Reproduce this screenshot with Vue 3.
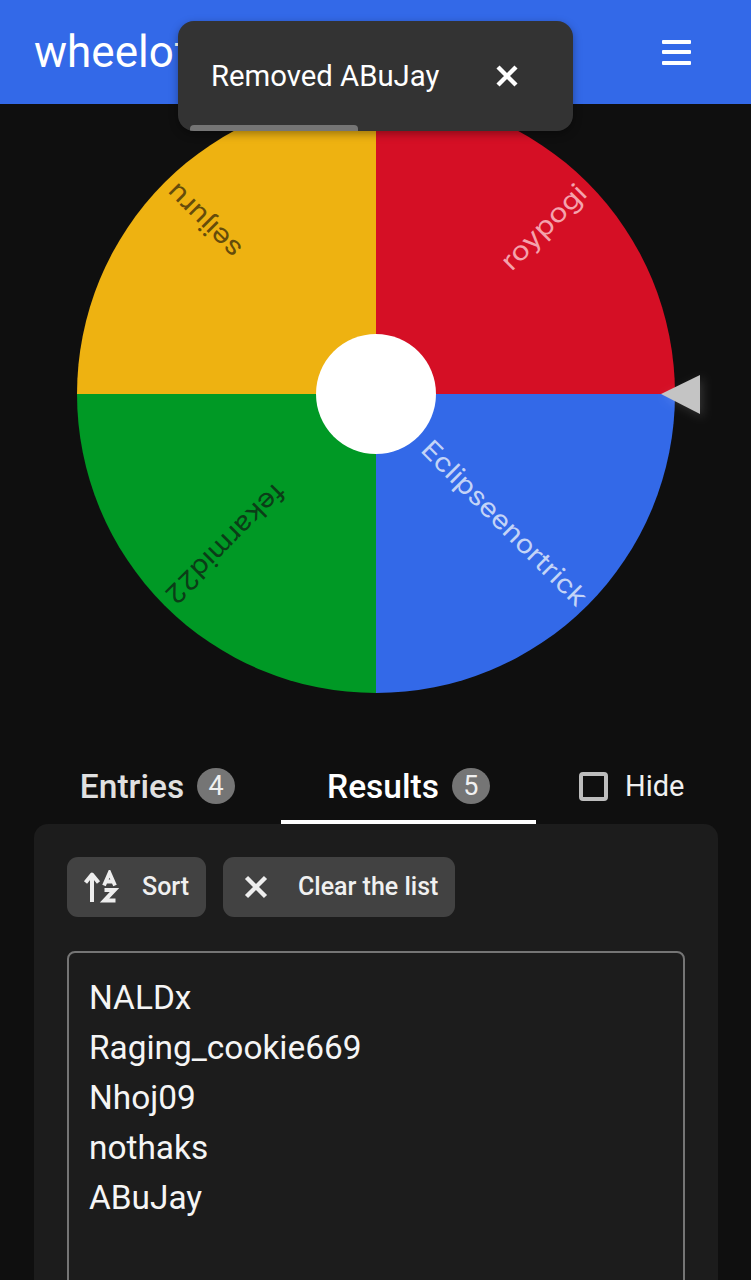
<template>
  <div class="page">
    <header class="topbar">
      <div class="logo">wheelofnames.com</div>
      <button class="menu-btn" aria-label="menu">
        <span></span><span></span><span></span>
      </button>
    </header>

    <!-- wheel -->
    <svg class="wheel" viewBox="0 0 751 641">
      <defs>
        <filter id="pointer-shadow" x="-50%" y="-50%" width="200%" height="200%">
          <feDropShadow dx="3" dy="3" stdDeviation="5" flood-color="#fff" flood-opacity="0.14" />
        </filter>
      </defs>
      <path v-for="s in sectors" :key="s.name" :d="s.d" :fill="s.color" />
      <text
        v-for="s in sectors"
        :key="s.name + '-label'"
        class="wheel-label"
        :transform="`translate(${CX} ${CY}) rotate(${s.angle})`"
        :x="s.x"
        y="0"
        :text-anchor="s.anchor"
        :fill="s.text"
        :textLength="s.len"
        lengthAdjust="spacingAndGlyphs"
      >{{ s.name }}</text>
      <circle :cx="CX" :cy="CY" r="60" fill="#fff" />
      <polygon points="661,290 700,271 700,310" fill="#c4c4c4" filter="url(#pointer-shadow)" />
    </svg>

    <div class="tabs">
      <div class="tab first">
        <span>Entries</span><span class="badge">4</span>
      </div>
      <div class="tab active">
        <span>Results</span><span class="badge">5</span>
      </div>
      <label class="hide">
        <span class="checkbox"></span>
        <span>Hide</span>
      </label>
    </div>

    <section class="card">
      <div class="actions">
        <button class="btn sort">
          <svg width="36" height="34" viewBox="0 0 36 34" fill="none" stroke="#eee" stroke-width="4">
            <path d="M9 32V5M2.5 12.5L9 4.5L15.5 12.5" stroke-linejoin="round" />
            <path d="M21 15.5L26.5 3L32 15.5M23 11.5H30" stroke-width="3.8" />
            <path d="M21.5 20H31.5L21.5 30.5H32.5" stroke-width="4" />
          </svg>
          <span>Sort</span>
        </button>
        <button class="btn clear">
          <svg width="24" height="24" viewBox="0 0 24 24" fill="none" stroke="#eee" stroke-width="4.4">
            <path d="M2.5 2.5L21.5 21.5M21.5 2.5L2.5 21.5" />
          </svg>
          <span>Clear the list</span>
        </button>
      </div>
      <div class="results">
        <div v-for="r in results" :key="r">{{ r }}</div>
      </div>
    </section>

    <!-- toast over the header -->
    <div class="toast">
      <span class="toast-text">Removed ABuJay</span>
      <svg width="22" height="22" viewBox="0 0 22 22" fill="none" stroke="#fff" stroke-width="4.4">
        <path d="M2 2L20 20M20 2L2 20" />
      </svg>
      <div class="toast-progress"></div>
    </div>
  </div>
</template>

<script setup>
const CX = 376
const CY = 290
const R = 299

function slice(from, to) {
  const a = (from * Math.PI) / 180
  const b = (to * Math.PI) / 180
  const x1 = CX + R * Math.cos(a)
  const y1 = CY + R * Math.sin(a)
  const x2 = CX + R * Math.cos(b)
  const y2 = CY + R * Math.sin(b)
  return `M${CX},${CY} L${x1},${y1} A${R},${R} 0 0 1 ${x2},${y2} Z`
}

const sectors = [
  { name: 'Eclipseenortrick', color: '#3369e8', text: '#c3d4f7', d: slice(0, 90), angle: 45, x: 293, anchor: 'end', len: 222 },
  { name: 'fekarmid22', color: '#009925', text: '#0b3d17', d: slice(90, 180), angle: 135, x: 291, anchor: 'end', len: 157 },
  { name: 'seijuru', color: '#eeb211', text: '#654c0b', d: slice(180, 270), angle: 225, x: 291, anchor: 'end', len: 94 },
  { name: 'roypogi', color: '#d50f25', text: '#f4a3ad', d: slice(270, 360), angle: 315, x: 291, anchor: 'end', len: 109 },
]

const results = ['NALDx', 'Raging_cookie669', 'Nhoj09', 'nothaks', 'ABuJay']
</script>

<style>
html, body { background: #0f0f0f; }
</style>

<style scoped>
.page {
  position: relative;
  height: 1280px;
  overflow: hidden;
  background: #0f0f0f;
  font-family: Roboto, "Liberation Sans", sans-serif;
  color: #fff;
}
.topbar {
  height: 104px;
  background: #3369e8;
  display: flex;
  align-items: center;
  justify-content: space-between;
  padding: 0 60px 0 34px;
}
.logo { font-size: 44px; white-space: nowrap; }
.menu-btn {
  width: 29px;
  height: 25px;
  padding: 0;
  background: none;
  border: 0;
  display: flex;
  flex-direction: column;
  justify-content: space-between;
}
.menu-btn span { display: block; height: 4px; border-radius: 1px; background: #fff; }
.wheel { display: block; width: 751px; height: 641px; }
.wheel-label {
  font-family: Inter, "Noto Sans", sans-serif;
  font-size: 26px;
  dominant-baseline: central;
}
.tabs {
  height: 79px;
  display: flex;
}
.tab {
  width: 255px;
  display: flex;
  align-items: center;
  justify-content: center;
  gap: 13px;
  padding-top: 7px;
  box-sizing: border-box;
  font-size: 33.5px;
  font-weight: 500;
  color: #e0e0e0;
  border-bottom: 4px solid transparent;
}
.tab.first { width: 247px; margin-left: 34px; }
.tab.active { color: #fff; border-bottom-color: #fff; }
.badge {
  width: 38px;
  height: 36px;
  border-radius: 50%;
  background: #757575;
  color: #f0f0f0;
  font-size: 27px;
  font-weight: 400;
  display: flex;
  align-items: center;
  justify-content: center;
}
.hide {
  display: flex;
  align-items: center;
  gap: 17px;
  margin-left: 43px;
  padding-top: 3px;
  font-size: 29px;
  color: #f0f0f0;
}
.checkbox {
  width: 29px;
  height: 29px;
  box-sizing: border-box;
  border: 4px solid #bdbdbd;
  border-radius: 4px;
}
.card {
  margin: 0 33px 0 34px;
  height: 600px;
  padding: 33px 33px 0;
  background: #1c1c1c;
  border-radius: 14px 14px 0 0;
}
.actions { display: flex; gap: 17px; }
.btn {
  height: 60px;
  padding: 0;
  border: 0;
  border-radius: 11px;
  background: #424242;
  color: #f0f0f0;
  font-family: inherit;
  font-size: 25px;
  font-weight: 500;
  display: flex;
  align-items: center;
}
.btn.sort { width: 139px; padding-left: 16px; gap: 23px; }
.btn.clear { width: 232px; padding-left: 21px; gap: 30px; }
.btn span { position: relative; top: -1px; }
.results {
  margin-top: 34px;
  width: 618px;
  height: 500px;
  box-sizing: border-box;
  padding: 20px 20px 0;
  border: 2px solid #757575;
  border-radius: 8px;
  font-size: 33.4px;
  line-height: 50px;
  color: #f5f5f5;
}
.toast {
  position: absolute;
  left: 178px;
  top: 21px;
  width: 395px;
  height: 110px;
  box-sizing: border-box;
  padding: 0 55px 0 33px;
  display: flex;
  align-items: center;
  justify-content: space-between;
  background: #333;
  border-radius: 16px;
  box-shadow: 0 3px 8px rgba(0, 0, 0, 0.35);
  overflow: hidden;
}
.toast-text { font-size: 29.3px; color: #fff; white-space: nowrap; }
.toast-progress {
  position: absolute;
  left: 12px;
  bottom: 0;
  width: 168px;
  height: 6px;
  border-radius: 4px 4px 0 0;
  background: #757575;
}
</style>
